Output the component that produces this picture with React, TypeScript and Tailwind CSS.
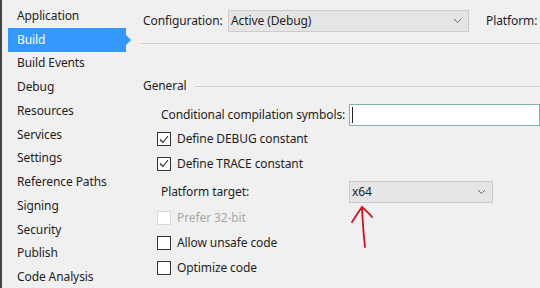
import React from "react";

const navItems = [
  "Application",
  "Build",
  "Build Events",
  "Debug",
  "Resources",
  "Services",
  "Settings",
  "Reference Paths",
  "Signing",
  "Security",
  "Publish",
  "Code Analysis",
];

function Chevron() {
  return (
    <svg width="9" height="6" viewBox="0 0 9 6" className="text-[#666]">
      <path d="M1 1l3.5 3.5L8 1" fill="none" stroke="currentColor" strokeWidth="1" />
    </svg>
  );
}

function Check({ checked, disabled }: { checked?: boolean; disabled?: boolean }) {
  return (
    <span
      className={
        "inline-flex h-[14px] w-[14px] shrink-0 items-center justify-center border bg-white " +
        (disabled ? "border-[#d8d8d8]" : "border-[#333]")
      }
    >
      {checked && (
        <svg width="10" height="9" viewBox="0 0 10 9">
          <path d="M1 4.5l3 3L9 1" fill="none" stroke="#222" strokeWidth="1.1" />
        </svg>
      )}
    </span>
  );
}

function CheckRow({ label, checked, disabled }: { label: string; checked?: boolean; disabled?: boolean }) {
  return (
    <div className="flex h-[24.6px] items-center gap-[6px] pl-[16px]">
      <Check checked={checked} disabled={disabled} />
      <span className={disabled ? "text-[#a8a8a8]" : "text-[#1e1e1e]"}>{label}</span>
    </div>
  );
}

export default function App() {
  return (
    <div
      className="flex h-[288px] w-[540px] overflow-hidden bg-[#f0f0f0] text-[12px] tracking-[-0.1px] text-[#1e1e1e]"
      style={{ fontFamily: '"Segoe UI", "Noto Sans", sans-serif' }}
    >
      <div className="w-[2px] shrink-0 bg-[#444]" />
      <nav className="w-[139px] shrink-0 pt-[4px]">
        {navItems.map((item) =>
          item === "Build" ? (
            <div key={item} className="relative ml-[6px] flex h-[23.75px] w-[118px] items-center bg-[#3399ff] pl-[9px] text-white">
              {item}
              <span className="absolute right-[-5px] top-1/2 h-0 w-0 -translate-y-1/2 border-y-[5px] border-l-[5px] border-y-transparent border-l-[#3399ff]" />
            </div>
          ) : (
            <div key={item} className="flex h-[23.75px] items-center pl-[15px]">
              {item}
            </div>
          )
        )}
      </nav>

      <main className="relative min-w-0 flex-1">
        <div className="flex h-[44px] items-center border-b border-[#cfcfcf] pb-[2px] pl-[2px]">
          <span className="w-[85px] shrink-0">Configuration:</span>
          <div className="flex h-[22px] w-[241px] shrink-0 items-center justify-between border border-[#cccccc] bg-[#e5e5e5] pl-[2px] pr-[6px]">
            <span>Active (Debug)</span>
            <Chevron />
          </div>
          <span className="ml-[17px] whitespace-nowrap">Platform:</span>
        </div>

        <div className="mt-[34px] flex h-[16px] items-center pl-[2px]">
          <span>General</span>
          <div className="ml-[8px] h-px flex-1 bg-[#cfcfcf]" />
        </div>

        <div className="mt-[9px] flex h-[24px] items-center pl-[20px]">
          <span className="w-[188px] shrink-0 whitespace-nowrap">Conditional compilation symbols:</span>
          <div className="flex h-[22px] flex-1 items-center border border-[#7eb4a9] bg-white pl-[2px]">
            <span className="h-[16px] w-px bg-[#222]" />
          </div>
        </div>

        <CheckRow label="Define DEBUG constant" checked />
        <CheckRow label="Define TRACE constant" checked />

        <div className="mt-[4px] flex h-[24px] items-center pl-[20px]">
          <span className="w-[188px] shrink-0">Platform target:</span>
          <div className="flex h-[22px] w-[144px] items-center justify-between border border-[#cccccc] bg-[#e5e5e5] pl-[2px] pr-[6px]">
            <span>x64</span>
            <Chevron />
          </div>
        </div>

        <div className="mt-[2px]">
          <CheckRow label="Prefer 32-bit" disabled />
          <CheckRow label="Allow unsafe code" />
          <CheckRow label="Optimize code" />
        </div>

        <svg className="absolute left-[207px] top-[203px]" width="26" height="48" viewBox="0 0 26 48">
          <path
            d="M14 4 C14.5 18 15.5 30 17 44 M4 19 C8 13 11 8 14 4 C17 7 21 10 24 14"
            fill="none"
            stroke="#d0101c"
            strokeWidth="1.8"
            strokeLinecap="round"
            strokeLinejoin="round"
          />
        </svg>
      </main>
    </div>
  );
}
